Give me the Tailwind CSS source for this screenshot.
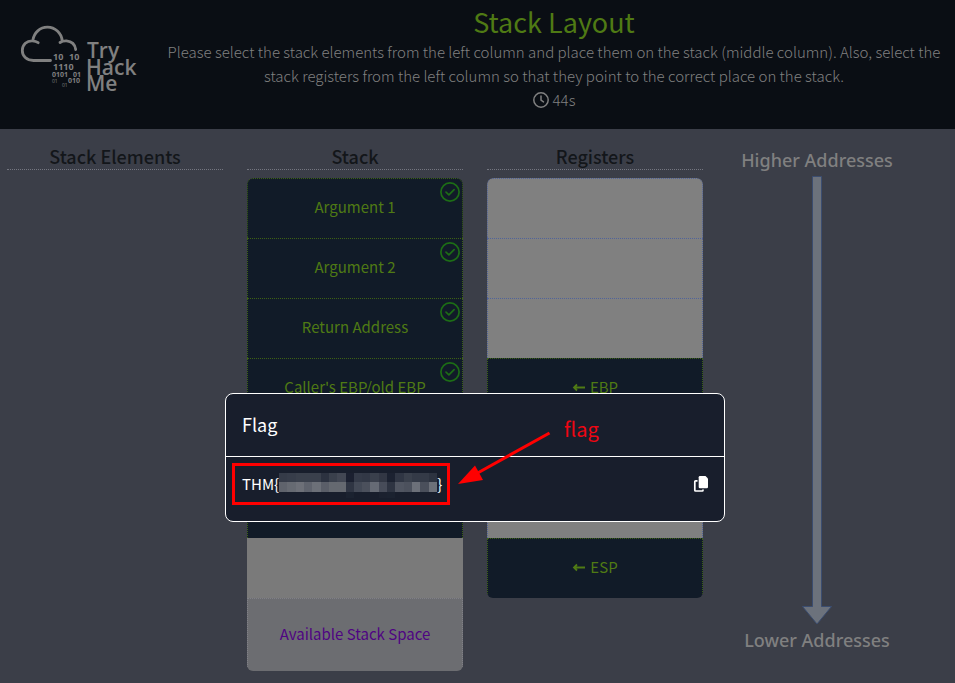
<!DOCTYPE html>
<html lang="en">
<head>
<meta charset="utf-8">
<title>Stack Layout</title>
<script src="https://cdn.jsdelivr.net/npm/@tailwindcss/browser@4"></script>
</head>
<body class="min-h-screen bg-[#3b3e48] font-['Noto_Sans_CJK_SC',sans-serif] text-[15px] leading-6 text-[#808080]">
<header class="flex bg-[#0a0e14] pt-1 pb-[17px] pr-[7px] pl-4 items-start">
  <svg class="mt-[18px] h-[76px] w-[124px] shrink-0" viewBox="16 22 124 76" role="img" aria-label="TryHackMe" fill="#808080" font-family="Open Sans, sans-serif" font-weight="700">
    <path d="M50.500 60.500H33.500C26.500 60.500 22.300 56 22.300 50.500C22.300 44.500 27 40.500 32.500 40.800C34.700 41 36.500 41.500 38.200 42.700M32.800 40.500C34 32.500 40 27.200 47.500 27.200C55 27.200 61.500 33 62.200 40.800M60 42.500C62 41.200 64 40.800 66.500 40.900C71.500 41.300 75 44.500 75.700 49.500" fill="none" stroke="#808080" stroke-width="2.800" stroke-linecap="round"/>
    <g font-size="9"><text x="53" y="60">10</text><text x="69" y="60">10</text></g>
    <text x="53" y="70" font-size="9">1110</text>
    <g font-size="7"><text x="52" y="77">0101</text><text x="73" y="77">01</text><text x="68" y="83">010</text></g>
    <g font-size="5" font-weight="400"><text x="52" y="83">01</text><text x="62" y="87">01</text></g>
    <g font-size="21" font-weight="600"><text x="87" y="58">Try</text><text x="86" y="75">Hack</text><text x="86" y="91">Me</text></g>
  </svg>
  <div class="flex-1 pl-5 text-center font-light">
    <h1 class="text-[27px] leading-9 font-normal text-[#4f7a14]">Stack Layout</h1>
    <p>Please select the stack elements from the left column and place them on the stack (middle column). Also, select the stack registers from the left column so that they point to the correct place on the stack.</p>
    <p class="flex items-center justify-center gap-1">
      <svg class="size-4" viewBox="0 0 16 16" fill="none" stroke="currentColor" stroke-width="1.500" stroke-linecap="round" stroke-linejoin="round"><circle cx="8" cy="8" r="7.200"/><path d="M8 4v4.200l2.500 1.700"/></svg>
      <span>44s</span>
    </p>
  </div>
</header>

<main class="grid grid-cols-4 gap-6 pt-[15px] pr-3 pb-3 pl-[7px]">
  <section>
    <h2 class="border-b border-dotted border-[#747680] pb-px text-center text-[18px] leading-6 font-medium text-[#13161a]">Stack Elements</h2>
  </section>

  <section>
    <h2 class="border-b border-dotted border-[#747680] pb-px text-center text-[18px] leading-6 font-medium text-[#13161a]">Stack</h2>
    <ul class="mt-2 overflow-hidden rounded-md text-center text-[#4f7a14]">
      <li class="relative h-[60px] rounded-t-md border border-b-0 border-dotted border-[#3d6114] bg-[#111b28] pt-4">Argument 1
        <svg class="absolute top-[3px] right-0.5 size-5" viewBox="0 0 20 20" fill="none" stroke="#1d6d16" stroke-width="1.700" stroke-linecap="round" stroke-linejoin="round"><circle cx="10" cy="10" r="9.100"/><path d="M6 10.200l2.900 2.700 5.200-5.200"/></svg></li>
      <li class="relative h-[60px] border border-b-0 border-dotted border-[#3d6114] bg-[#111b28] pt-4">Argument 2
        <svg class="absolute top-[3px] right-0.5 size-5" viewBox="0 0 20 20" fill="none" stroke="#1d6d16" stroke-width="1.700" stroke-linecap="round" stroke-linejoin="round"><circle cx="10" cy="10" r="9.100"/><path d="M6 10.200l2.900 2.700 5.200-5.200"/></svg></li>
      <li class="relative h-[60px] border border-b-0 border-dotted border-[#3d6114] bg-[#111b28] pt-4">Return Address
        <svg class="absolute top-[3px] right-0.5 size-5" viewBox="0 0 20 20" fill="none" stroke="#1d6d16" stroke-width="1.700" stroke-linecap="round" stroke-linejoin="round"><circle cx="10" cy="10" r="9.100"/><path d="M6 10.200l2.900 2.700 5.200-5.200"/></svg></li>
      <li class="relative h-[60px] border border-b-0 border-dotted border-[#3d6114] bg-[#111b28] pt-4">Caller's EBP/old EBP
        <svg class="absolute top-[3px] right-0.5 size-5" viewBox="0 0 20 20" fill="none" stroke="#1d6d16" stroke-width="1.700" stroke-linecap="round" stroke-linejoin="round"><circle cx="10" cy="10" r="9.100"/><path d="M6 10.200l2.900 2.700 5.200-5.200"/></svg></li>
      <li class="h-[60px] border border-b-0 border-dotted border-[#3d6114] bg-[#111b28]"></li>
      <li class="h-[60px] border border-b-0 border-dotted border-[#3d6114] bg-[#111b28]"></li>
      <li class="h-[60px] bg-[#7a7a7a]"></li>
      <li class="h-[73px] border border-b-0 border-dotted border-[#808087] bg-[#6c6d71] pt-[23px] text-[#4f0483]">Available Stack Space</li>
    </ul>
  </section>

  <section>
    <h2 class="border-b border-dotted border-[#747680] pb-px text-center text-[18px] leading-6 font-medium text-[#13161a]">Registers</h2>
    <ul class="mt-2 overflow-hidden rounded-md text-center text-[#4f7a14]">
      <li class="h-[60px] rounded-t-md border border-b-0 border-dotted border-[#50639a] bg-[#808080]"></li>
      <li class="h-[60px] border border-b-0 border-dotted border-[#50639a] bg-[#808080]"></li>
      <li class="h-[60px] border border-b-0 border-dotted border-[#50639a] bg-[#808080]"></li>
      <li class="flex h-[60px] items-start justify-center gap-1 border border-b-0 border-dotted border-[#3d6114] bg-[#111b28] pt-4">
        <svg class="mt-1.5 h-3 w-3.5" viewBox="0 0 14 12" fill="none" stroke="currentColor" stroke-width="1.800"><path d="M13 6.500H2M5 3.500l-3 3 3 3"/></svg>EBP</li>
      <li class="h-[60px] border border-b-0 border-dotted border-[#50639a] bg-[#808080]"></li>
      <li class="h-[60px] border border-b-0 border-dotted border-[#50639a] bg-[#808080]"></li>
      <li class="flex h-[60px] items-start justify-center gap-1 border border-b-0 border-dotted border-[#3d6114] bg-[#111b28] pt-4">
        <svg class="mt-1.5 h-3 w-3.5" viewBox="0 0 14 12" fill="none" stroke="currentColor" stroke-width="1.800"><path d="M13 6.500H2M5 3.500l-3 3 3 3"/></svg>ESP</li>
    </ul>
  </section>

  <section class="flex flex-col items-center pt-1 pr-9 font-['Noto_Sans',sans-serif] text-[18px] font-medium">
    <p>Higher Addresses</p>
    <svg class="mt-1 mb-[3px] h-[449px] w-[30px]" viewBox="0 0 30 449" fill="#6c727c" stroke="#3b4d70" stroke-width="1"><path d="M10.500.500h9V430.500H29.500L15 448 .5 430.500H10.500z"/></svg>
    <p>Lower Addresses</p>
  </section>
</main>

<section role="dialog" aria-labelledby="flag-title" class="absolute top-[393px] left-[225px] w-[500px] rounded-lg border border-white bg-[#181e2c] text-white">
  <h2 id="flag-title" class="border-b border-white px-4 pt-[18px] pb-5 text-[18px] leading-6">Flag</h2>
  <div class="flex items-center justify-between pt-[11px] pr-[15px] pb-[21px] pl-4 leading-8">
    <div class="flex items-center">
      <span>THM{</span>
      <svg class="h-7 w-[158px]" viewBox="0 0 19 28" preserveAspectRatio="none" shape-rendering="crispEdges" role="img" aria-label="hidden">
        <g id="mosaic"></g>
      </svg>
      <span>}</span>
    </div>
    <button type="button" aria-label="Copy flag">
      <svg class="size-4" viewBox="0 0 16 16"><path d="M7 0h5.500L15 2.500v8.500a1.300 1.300 0 0 1-1.300 1.300H7A1.300 1.300 0 0 1 5.700 11V1.300A1.300 1.300 0 0 1 7 0z" fill="#fff"/><path d="M4.500 4.900H2.600a.8.800 0 0 0-.8.800v8.500a.8.800 0 0 0 .8.800h6.600a.8.800 0 0 0 .8-.8v-.8" fill="none" stroke="#fff" stroke-width="1.700"/></svg>
    </button>
  </div>
</section>

<div class="absolute top-[463px] left-[232px] h-[42px] w-[218px] border-3 border-[#ff0000]"></div>
<svg class="absolute top-[428px] left-[456px] h-[60px] w-[100px]" viewBox="456 428 100 60"><path d="M549.500 433L474 475" stroke="#f00" stroke-width="3"/><path d="M458 484L475 465.500L483 480z" fill="#f00"/></svg>
<p class="absolute top-[417px] left-[564px] text-[20px] leading-6 text-[#f00612]">flag</p>

<script>
const rows = [
  [0, 3, 9, ["#353b48","#373d4a","#3a404c","#3a404c","#3a404c","#2c3240","#3a404c","#424753","#1b2030","#343a48","#323846","#3a404c","#323744","#1c2231","#303644","#3a404c","#343a47","#343a47","#2d3340"]],
  [0, 12, 10, ["#5f636c","#666a72","#6d7078","#5f636d","#6c7078","#5a5e68","#656970","#656970","#2f3543","#434956","#4b505c","#666b75","#474c59","#2e3442","#505561","#4c515d","#6c7079","#4a4f5b","#6c7079"]],
  [8, 22, 6, ["#1b2230","#181e2c","#181e2c","#181e2c","#1b212f","#1b2230"]]
];
document.getElementById("mosaic").innerHTML = rows.map(([x, y, h, colors]) =>
  colors.map((c, i) => `<rect x="${x + i}" y="${y}" width="1" height="${h}" fill="${c}"/>`).join("")).join("");
</script>
</body>
</html>
